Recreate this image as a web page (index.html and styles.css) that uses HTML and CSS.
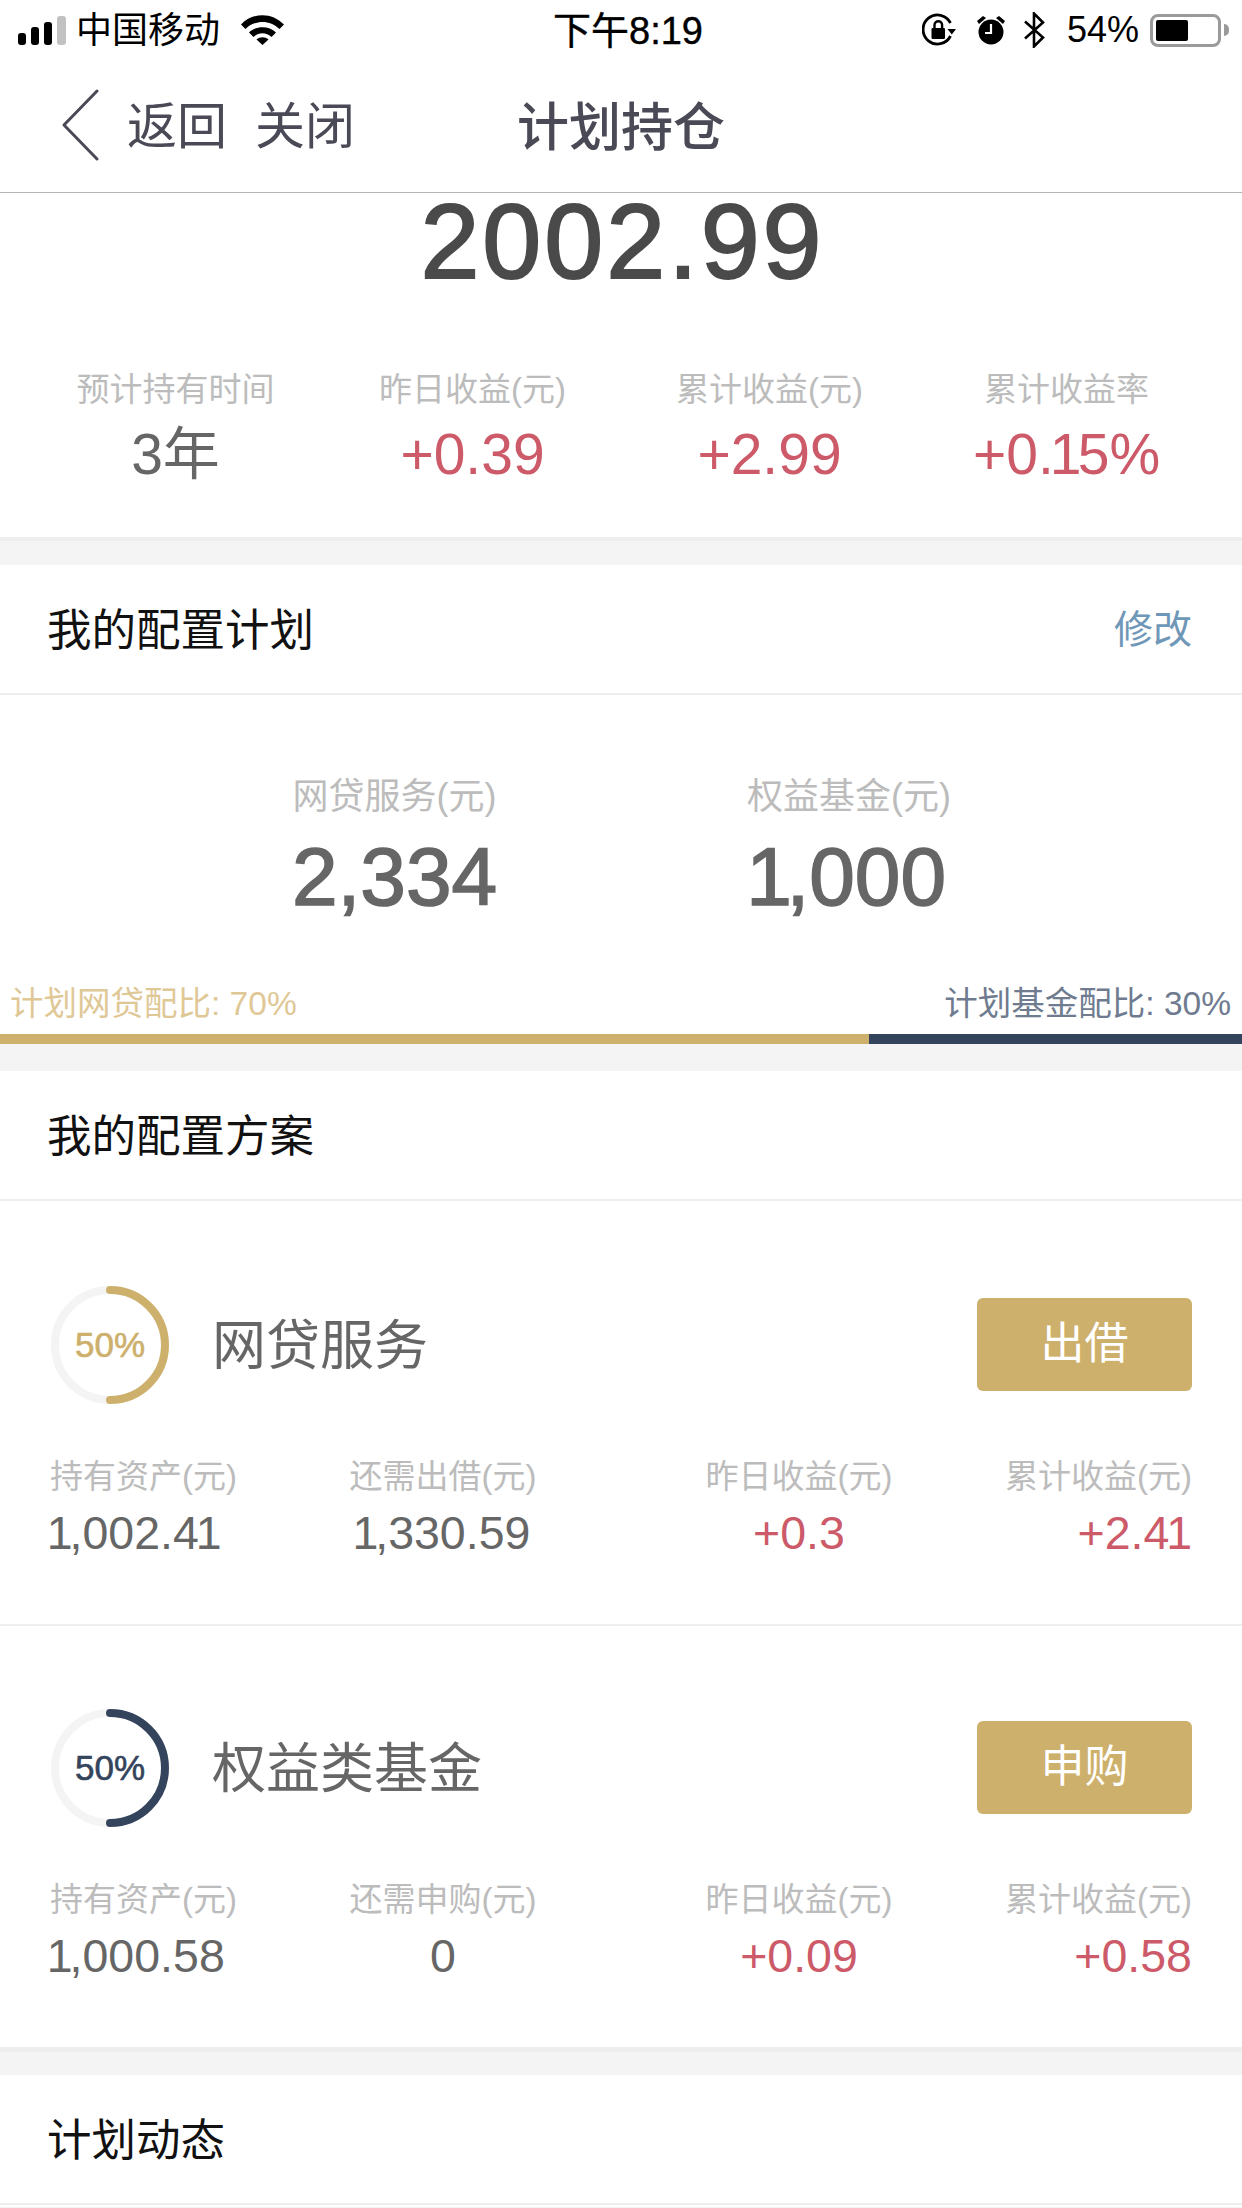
FILE: index.html
```html
<!DOCTYPE html>
<html lang="zh-CN">
<head>
<meta charset="utf-8">
<title>计划持仓</title>
<link rel="stylesheet" href="styles.css">
</head>
<body>
<div class="page">
  <header class="statusbar">
    <div class="status-left">
      <svg class="signal" width="48" height="30" viewBox="0 0 48 30">
        <rect x="0" y="17" width="8" height="12" rx="3"/>
        <rect x="13" y="11" width="8" height="18" rx="3"/>
        <rect x="26" y="6" width="8" height="23" rx="3"/>
        <rect class="signal-off" x="39" y="0" width="9" height="29" rx="3"/>
      </svg>
      <span class="carrier">中国移动</span>
      <svg class="wifi" width="43" height="30" viewBox="0 0 43 30">
        <path d="M0 9.500C12-3 31-3 43 9.500L38.500 14C29 4.500 14 4.500 4.500 14Z"/>
        <path d="M8 17.500C15 10.500 28 10.500 35 17.500L30.500 22C25 17 18 17 12.500 22Z"/>
        <path d="M15.500 24.500C19 21.500 24 21.500 27.500 24.500L21.500 30Z"/>
      </svg>
    </div>
    <div class="status-time">下午8:19</div>
    <div class="status-right">
      <svg width="34" height="34" viewBox="0 0 34 34" class="ic-lock">
        <path d="M28.500 23A14.500 14.500 0 1 1 28.500 10" fill="none" stroke="#000" stroke-width="2.800"/>
        <path d="M25.500 16h8.500l-4.200 5.500z"/>
        <rect x="9.500" y="15" width="13.500" height="11" rx="1.200"/>
        <path d="M12.500 16v-4a3.800 3.800 0 0 1 7.600 0v4" fill="none" stroke="#000" stroke-width="2.400"/>
      </svg>
      <svg width="28" height="30" viewBox="0 0 28 30" class="ic-alarm">
        <circle cx="14" cy="17" r="12.500"/>
        <path d="M0 6l6-5 3 2-7 6zM28 6l-6-5-3 2 7 6z"/>
        <path d="M14 9v9H8" fill="none" stroke="#fff" stroke-width="2.200"/>
      </svg>
      <svg width="21" height="36" viewBox="0 0 21 36" class="ic-bt">
        <path d="M1 9.500L19 25.500 10 34.500V1.500L19 10.500 1 26.500" fill="none" stroke="#000" stroke-width="2.600"/>
      </svg>
      <span class="battery-pct">54%</span>
      <div class="battery"><div class="battery-fill"></div></div>
      <div class="battery-nub"></div>
    </div>
  </header>

  <nav class="navbar">
    <svg class="chevron" width="38" height="72" viewBox="0 0 38 72">
      <path d="M36 2L3 36 36 70" fill="none" stroke="#4a4a57" stroke-width="3" stroke-linecap="round" stroke-linejoin="round"/>
    </svg>
    <span class="nav-link">返回</span>
    <span class="nav-link">关闭</span>
    <h1 class="nav-title">计划持仓</h1>
  </nav>

  <section class="summary">
    <div class="total">2002.99</div>
    <div class="stats">
      <div class="stat"><div class="stat-label">预计持有时间</div><div class="stat-value">3年</div></div>
      <div class="stat"><div class="stat-label">昨日收益(元)</div><div class="stat-value up">+0.39</div></div>
      <div class="stat"><div class="stat-label">累计收益(元)</div><div class="stat-value up">+2.99</div></div>
      <div class="stat"><div class="stat-label">累计收益率</div><div class="stat-value up">+0<span class="tight">.</span><span class="n1">1</span>5%</div></div>
    </div>
  </section>

  <section class="card">
    <div class="card-head"><h2 class="card-title">我的配置计划</h2><span class="edit">修改</span></div>
    <div class="amounts">
      <div class="amount"><div class="amount-label">网贷服务(元)</div><div class="amount-value">2,334</div></div>
      <div class="amount"><div class="amount-label">权益基金(元)</div><div class="amount-value"><span class="n1 lead">1</span>,000</div></div>
    </div>
    <div class="ratio-labels"><span class="ratio-gold">计划网贷配比: 70%</span><span class="ratio-navy">计划基金配比: 30%</span></div>
    <div class="ratio-bar"><div class="ratio-bar-gold"></div><div class="ratio-bar-navy"></div></div>
  </section>

  <section class="card">
    <div class="card-head"><h2 class="card-title">我的配置方案</h2></div>
    <article class="scheme scheme-first">
      <div class="scheme-top">
        <div class="ring ring-gold">
          <svg width="120" height="120" viewBox="0 0 120 120">
            <circle cx="60" cy="60" r="55" fill="none" stroke="#f4f4f4" stroke-width="8"/>
            <path d="M60 5A55 55 0 0 1 60 115" fill="none" stroke="#cdb06c" stroke-width="8" stroke-linecap="round"/>
          </svg>
          <span class="ring-text">50%</span>
        </div>
        <div class="scheme-name">网贷服务</div>
        <button class="action">出借</button>
      </div>
      <div class="details">
        <div class="group">
          <div class="col col-l"><div class="col-label">持有资产(元)</div><div class="col-value"><span class="n1 lead">1</span>,002.<span class="tight">4</span>1</div></div>
          <div class="col col-c"><div class="col-label">还需出借(元)</div><div class="col-value"><span class="n1 lead">1</span>,330.59</div></div>
        </div>
        <div class="group">
          <div class="col col-c"><div class="col-label">昨日收益(元)</div><div class="col-value up">+0.3</div></div>
          <div class="col col-r"><div class="col-label">累计收益(元)</div><div class="col-value up">+2.<span class="tight">4</span>1</div></div>
        </div>
      </div>
    </article>
    <article class="scheme">
      <div class="scheme-top">
        <div class="ring ring-navy">
          <svg width="120" height="120" viewBox="0 0 120 120">
            <circle cx="60" cy="60" r="55" fill="none" stroke="#f4f4f4" stroke-width="8"/>
            <path d="M60 5A55 55 0 0 1 60 115" fill="none" stroke="#34445c" stroke-width="8" stroke-linecap="round"/>
          </svg>
          <span class="ring-text">50%</span>
        </div>
        <div class="scheme-name">权益类基金</div>
        <button class="action">申购</button>
      </div>
      <div class="details">
        <div class="group">
          <div class="col col-l"><div class="col-label">持有资产(元)</div><div class="col-value"><span class="n1 lead">1</span>,000.58</div></div>
          <div class="col col-c"><div class="col-label">还需申购(元)</div><div class="col-value">0</div></div>
        </div>
        <div class="group">
          <div class="col col-c"><div class="col-label">昨日收益(元)</div><div class="col-value up">+0.09</div></div>
          <div class="col col-r"><div class="col-label">累计收益(元)</div><div class="col-value up">+0.58</div></div>
        </div>
      </div>
    </article>
  </section>

  <section class="card card-last">
    <div class="card-head"><h2 class="card-title">计划动态</h2></div>
  </section>
</div>
</body>
</html>
```
FILE: styles.css
```css
* { box-sizing: border-box; margin: 0; padding: 0; }
html, body { background: #f4f4f4; }
body {
  width: 1242px;
  height: 2208px;
  overflow: hidden;
  font-family: "Liberation Sans", "Noto Sans CJK SC", sans-serif;
}
.page { width: 1242px; height: 2208px; overflow: hidden; display: flex; flex-direction: column; }
.n1 { letter-spacing: -0.065em; }
.n1.lead { margin-left: -0.07em; }
.tight { letter-spacing: -0.07em; }

/* status bar */
.statusbar {
  height: 60px;
  flex: none;
  background: #fff;
  display: flex;
  align-items: center;
  justify-content: space-between;
  padding: 0 13px 0 18px;
  position: relative;
  color: #000;
}
.status-left { display: flex; align-items: center; }
.signal { fill: #000; margin-top: 1px; }
.signal .signal-off { fill: #c2c2c2; }
.carrier { font-size: 36px; line-height: 40px; margin: 2px 0 0 10px; }
.wifi { fill: #000; margin-left: 21px; margin-top: -1px; }
.status-time {
  position: absolute;
  left: 553px;
  top: 11px;
  font-size: 38px;
  line-height: 40px;
  white-space: nowrap;
  -webkit-text-stroke: 0.400px #000;
}
.status-right { display: flex; align-items: center; }
.ic-lock { margin-right: 21px; }
.ic-alarm { margin-right: 19px; }
.ic-bt { margin-right: 22px; }
.battery-pct { font-size: 36px; line-height: 40px; margin-right: 11px; }
.battery {
  width: 71px;
  height: 33px;
  border: 3px solid #9a9a9a;
  border-radius: 8px;
  padding: 3px;
}
.battery-fill { width: 32px; height: 100%; background: #000; border-radius: 2px; }
.battery-nub {
  width: 5px;
  height: 12px;
  margin-left: 3px;
  background: #9a9a9a;
  border-radius: 0 5px 5px 0;
}

/* nav */
.navbar {
  height: 133px;
  flex: none;
  background: #fff;
  border-bottom: 1px solid #b4b4b4;
  display: flex;
  align-items: center;
  position: relative;
  padding-left: 61px;
  color: #4a4a57;
}
.chevron { flex: none; margin-top: -2px; }
.nav-link { font-size: 50px; line-height: 56px; margin: 2px 0 0 28px; }
.nav-title {
  position: absolute;
  left: 0;
  right: 0;
  top: 40px;
  text-align: center;
  font-size: 52px;
  line-height: 56px;
  font-weight: 500;
}

/* summary */
.summary { background: #fff; height: 348px; flex: none; border-bottom: 4px solid #eee; }
.total {
  text-align: center;
  font-size: 106px;
  letter-spacing: 3px;
  line-height: 97px;
  padding-left: 3px;
  color: #4a4a4a;
  -webkit-text-stroke: 2px #4a4a4a;
  height: 97px;
}
.stats {
  display: grid;
  grid-template-columns: repeat(4, 297px);
  padding: 76px 0 0 27px;
  text-align: center;
}
.stat-label { font-size: 33px; line-height: 48px; color: #bcbcbc; }
.stat-value { font-size: 57px; line-height: 64px; margin-top: 8px; color: #666; }
.up { color: #cc5a69; }

/* cards */
.card { background: #fff; margin-top: 27px; flex: none; }
.summary + .card { margin-top: 24px; }
.card-head {
  height: 130px;
  border-bottom: 2px solid #eee;
  display: flex;
  align-items: center;
  justify-content: space-between;
  padding: 0 50px 0 47px;
}
.card-title { font-size: 44.500px; line-height: 56px; font-weight: 400; color: #111; margin-top: 3px; }
.edit { font-size: 39px; line-height: 50px; color: #6f97b7; margin-top: 2px; }

.amounts {
  display: grid;
  grid-template-columns: 457px 452px;
  padding: 78px 0 0 166px;
  text-align: center;
}
.amount-label { font-size: 36px; line-height: 48px; color: #bcbcbc; }
.amount-value {
  font-size: 82px;
  line-height: 90px;
  margin-top: 11px;
  color: #666;
  -webkit-text-stroke: 1.600px #666;
}
.ratio-labels {
  display: flex;
  justify-content: space-between;
  padding: 60px 11px 0 10px;
  font-size: 33.500px;
  line-height: 44px;
  height: 112px;
}
.ratio-gold { color: #e0c896; }
.ratio-navy { color: #6f7b8f; }
.ratio-bar { display: flex; height: 10px; }
.ratio-bar-gold { width: 869px; background: #cdb06c; }
.ratio-bar-navy { flex: 1; background: #34445c; }

/* schemes */
.scheme { padding: 82px 50px 0; border-top: 2px solid #eee; }
.scheme-first { border-top: 0; height: 423px; padding-top: 84px; }
.scheme + .scheme { border-bottom: 5px solid #eee; height: 428px; }
.scheme-top { display: flex; align-items: center; height: 120px; }
.ring { position: relative; width: 120px; height: 120px; flex: none; }
.ring svg { display: block; }
.ring-text {
  position: absolute;
  inset: 0;
  display: flex;
  align-items: center;
  justify-content: center;
  font-size: 35px;
  -webkit-text-stroke: 0.600px currentColor;
}
.ring-gold { color: #cdb06c; }
.ring-navy { color: #34445c; }
.scheme-name { font-size: 54px; line-height: 64px; color: #666; margin: 2px 0 0 42px; flex: 1; }
.action {
  width: 215px;
  height: 93px;
  border: 0;
  border-radius: 6px;
  background: #cdb06c;
  color: #fff;
  font: inherit;
  font-size: 44px;
  padding-bottom: 8px;
  margin-top: -2px;
}
.details { display: flex; justify-content: space-between; margin-top: 52px; }
.group { display: flex; gap: 114px; }
.col { width: 186px; white-space: nowrap; display: flex; flex-direction: column; }
.col-l { align-items: flex-start; }
.col-c { align-items: center; }
.col-r { align-items: flex-end; }
.col-label { font-size: 33px; line-height: 40px; color: #bcbcbc; }
.col-value { font-size: 46.500px; line-height: 52px; margin-top: 10px; color: #666; }
.col-value.up { color: #cc5a69; }

.card-last { height: 132px; margin-top: 23px; }
```
